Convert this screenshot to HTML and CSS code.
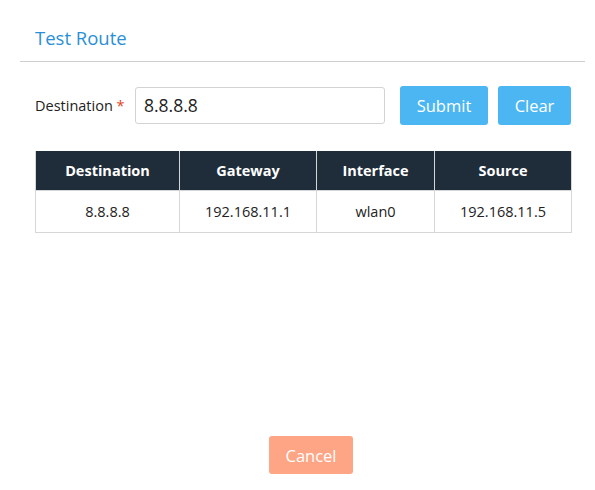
FILE: index.html
```html
<!DOCTYPE html>
<html>
<head>
<meta charset="utf-8">
<link rel="stylesheet" href="styles.css">
</head>
<body>
<div class="dialog">
  <div class="header">
    <h2 class="title">Test Route</h2>
  </div>
  <div class="body">
    <div class="form-row">
      <label class="label">Destination <span class="req">*</span></label>
      <input class="input" type="text" value="8.8.8.8">
      <button class="btn btn-primary submit">Submit</button>
      <button class="btn btn-primary clear">Clear</button>
    </div>
    <table class="routes">
      <thead>
        <tr>
          <th class="c1">Destination</th>
          <th class="c2">Gateway</th>
          <th class="c3">Interface</th>
          <th class="c4">Source</th>
        </tr>
      </thead>
      <tbody>
        <tr>
          <td>8.8.8.8</td>
          <td>192.168.11.1</td>
          <td>wlan0</td>
          <td>192.168.11.5</td>
        </tr>
      </tbody>
    </table>
  </div>
  <div class="footer">
    <button class="btn btn-cancel">Cancel</button>
  </div>
</div>
</body>
</html>
```
FILE: styles.css
```css
* { box-sizing: border-box; }
html, body {
  margin: 0;
  padding: 0;
  background: #fff;
  font-family: "Open Sans", "Noto Sans", sans-serif;
  color: #222;
}
.dialog {
  width: 595px;
  height: 490px;
  display: flex;
  flex-direction: column;
}
.header {
  margin: 0 10px 0 20px;
  border-bottom: 1px solid #cfcfcf;
  padding: 25px 15px 10px;
  height: 62px;
}
.title {
  margin: 0;
  font-size: 18.5px;
  font-weight: 400;
  color: #2a8fd6;
  line-height: 26px;
}
.body {
  padding: 23px 24px 0 35px;
  flex: 1;
}
.form-row {
  display: flex;
  align-items: center;
  height: 40px;
}
.label {
  font-size: 14.5px;
  color: #222;
  width: 100px;
}
.req { color: #e2431e; }
.input {
  width: 250px;
  height: 37px;
  border: 1px solid #d3d3d3;
  border-radius: 3px;
  padding: 0 8px;
  font-family: inherit;
  font-size: 17.5px;
  color: #222;
  margin-right: 15px;
  outline: none;
}
.btn {
  border: none;
  border-radius: 3px;
  color: #fff;
  font-family: inherit;
  font-size: 16.5px;
  height: 39px;
  cursor: pointer;
}
.btn-primary { background: #4cb6f3; }
.submit { width: 88px; margin-right: 10px; }
.clear { width: 73px; }
.routes {
  margin-top: 26px;
  border-collapse: collapse;
  width: 536px;
  table-layout: fixed;
}
.routes th {
  background: #1f2d3b;
  color: #fff;
  font-weight: 700;
  font-size: 14.5px;
  height: 39px;
  border: 1px solid #d6d6d6;
  border-top: none;
}
.routes td {
  height: 42px;
  text-align: center;
  font-size: 14.5px;
  border: 1px solid #d6d6d6;
  color: #222;
}
.c1 { width: 144px; }
.c2 { width: 137px; }
.c3 { width: 118px; }
.c4 { width: 137px; }
.footer {
  display: flex;
  justify-content: center;
  padding: 0 0 16px 27px;
}
.btn-cancel {
  background: #fda585;
  width: 84px;
  height: 38px;
}
```
